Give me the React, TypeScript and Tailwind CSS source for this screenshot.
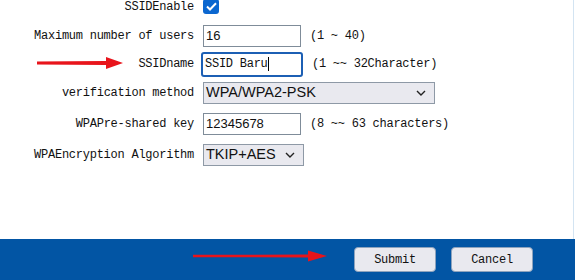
import React from "react";

const mono = "font-['Liberation_Mono','DejaVu_Sans_Mono',monospace] text-[12px] tracking-[-0.25px] text-[#111]";
const sans = "font-['Liberation_Sans',Arial,sans-serif]";

function Row({ label, className, children }: { label: string; className: string; children: React.ReactNode }) {
  return (
    <div className={`flex items-center ${className}`}>
      <div className={`w-[195px] shrink-0 pr-[1px] text-right whitespace-nowrap ${mono}`}>{label}</div>
      <div className="ml-[8px] flex items-center">{children}</div>
    </div>
  );
}

function Chevron() {
  return (
    <svg width="10" height="6" viewBox="0 0 10 6" className="shrink-0">
      <path d="M1 1 L5 5 L9 1" fill="none" stroke="#222" strokeWidth="1.4" />
    </svg>
  );
}

function Hint({ text }: { text: string }) {
  return <span className={`ml-[9px] whitespace-nowrap ${mono}`}>{text}</span>;
}

export default function App() {
  return (
    <div className="relative w-[575px] h-[280px] bg-white overflow-hidden">
      <div className="w-[574px] h-[239px] border-r border-[#d3e4f2]">
        {/* CHECKBOX ROW */}
        <Row label="SSIDEnable" className="h-[14px]">
          <div className="w-[16px] h-[15px] -mt-[1px] rounded-[3px] bg-[#0b67d0] flex items-center justify-center">
            <svg width="11" height="9" viewBox="0 0 11 9">
              <path d="M1 4.5 L4 7.5 L10 1.2" fill="none" stroke="white" strokeWidth="2" />
            </svg>
          </div>
        </Row>

        <Row label="Maximum number of users" className="h-[28px] mt-[8px]">
          <div className={`w-[98px] h-[22px] border border-[#7f8c99] bg-white px-[2px] flex items-center text-[13px] text-[#111] ${sans}`}>16</div>
          <Hint text="(1 ~ 40)" />
        </Row>

        <Row label="SSIDname" className="h-[28px]">
          <div className="w-[102px] h-[25px] -ml-[2px] border-2 border-[#1c5fb4] rounded-[3px] bg-white px-[2px] flex items-center">
            <span className={mono}>SSID Baru</span>
            <span className="w-[1px] h-[14px] bg-black" />
          </div>
          <Hint text="(1 ~~ 32Character)" />
        </Row>

        <Row label="verification method" className="h-[30px]">
          <div className={`w-[232px] h-[22px] border border-[#8e99a6] bg-[#e9e9ef] pl-[2px] pr-[8px] flex items-center justify-between text-[14.5px] text-[#111] ${sans}`}>
            <span>WPA/WPA2-PSK</span>
            <Chevron />
          </div>
        </Row>

        <Row label="WPAPre-shared key" className="h-[32px]">
          <div className={`w-[98px] h-[22px] border border-[#7f8c99] bg-white px-[2px] flex items-center text-[13px] text-[#111] ${sans}`}>12345678</div>
          <Hint text="(8 ~~ 63 characters)" />
        </Row>

        <Row label="WPAEncryption Algorithm" className="h-[30px]">
          <div className={`w-[101px] h-[22px] border border-[#8e99a6] bg-[#e9e9ef] pl-[2px] pr-[8px] flex items-center justify-between text-[14.5px] text-[#111] ${sans}`}>
            <span>TKIP+AES</span>
            <Chevron />
          </div>
        </Row>
      </div>

      {/* FOOTER */}
      <div className="h-[41px] bg-[#0255a4] flex items-center pl-[354px] gap-[15px]">
        <button className={`w-[82px] h-[25px] rounded-[4px] border border-[#8ea3bd] bg-[#e9e9ef] ${mono}`}>Submit</button>
        <button className={`w-[82px] h-[25px] rounded-[4px] border border-[#8ea3bd] bg-[#e9e9ef] ${mono}`}>Cancel</button>
      </div>

      {/* ANNOTATION ARROWS */}
      <svg className="absolute left-0 top-0 pointer-events-none" width="575" height="280">
        <path d="M37 61.5 L106 61 L106 57 L123 63 L106 69 L106 65 L37 64.5 Z" fill="#e8141b" />
        <path d="M193 254.8 L308 254.5 L308 250.5 L327 256 L308 261.5 L308 257.5 L193 257.2 Z" fill="#e8141b" />
      </svg>
    </div>
  );
}
